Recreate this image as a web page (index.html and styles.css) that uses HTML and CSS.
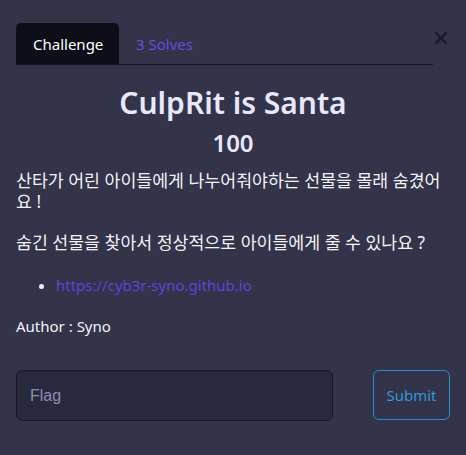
FILE: index.html
```html
<!DOCTYPE html>
<html lang="ko">
<head>
<meta charset="utf-8">
<link rel="stylesheet" href="styles.css">
</head>
<body>
<div class="modal">
  <button class="close" aria-label="Close">
    <svg width="12" height="12" viewBox="0 0 12 12"><path d="M1 1L11 11M11 1L1 11" stroke="#1b1b2c" stroke-width="2.4" stroke-linecap="square"/></svg>
  </button>
  <nav class="tabs">
    <span class="tab active">Challenge</span>
    <span class="tab">3 Solves</span>
  </nav>
  <h1 class="title">CulpRit is Santa</h1>
  <h2 class="points">100</h2>
  <div class="desc">
    <p class="ko">산타가 어린 아이들에게 나누어줘야하는 선물을 몰래 숨겼어요 !</p>
    <p class="ko">숨긴 선물을 찾아서 정상적으로 아이들에게 줄 수 있나요 ?</p>
    <ul>
      <li><a href="#">https://cyb3r-syno.github.io</a></li>
    </ul>
    <p>Author : Syno</p>
  </div>
  <form class="flag-form">
    <input class="flag-input" type="text" placeholder="Flag">
    <button class="submit" type="button">Submit</button>
  </form>
</div>
</body>
</html>
```

FILE: styles.css
```css
html, body {
  margin: 0;
  padding: 0;
  background: #33334a;
}
body {
  font-family: "Noto Sans", "Noto Sans CJK KR", sans-serif;
  color: #f2f2f7;
  width: 466px;
  height: 455px;
  overflow: hidden;
}
.modal {
  position: relative;
  padding: 23px 16px 0 16px;
}
.close {
  position: absolute;
  left: 435px;
  top: 32px;
  width: 12px;
  height: 12px;
  padding: 0;
  border: 0;
  background: none;
  display: block;
}
.close svg { display: block; }
.tabs {
  display: flex;
  width: 417px;
  border-bottom: 1px solid #1a1a28;
  height: 41px;
}
.tab {
  display: flex;
  align-items: center;
  padding: 0 17px;
  font-size: 15px;
  color: #6150de;
  border-radius: 5px 5px 0 0;
}
.tab.active {
  background: #0e0e18;
  color: #ffffff;
  width: 69px;
}
.title {
  margin: 19px 0 0 0;
  text-align: center;
  font-size: 30px;
  font-weight: 600;
  line-height: 38px;
  color: #e8e8fc;
}
.points {
  margin: 5px 0 0 0;
  text-align: center;
  font-size: 24px;
  font-weight: 600;
  line-height: 32px;
  color: #e8e8fc;
}
.desc {
  margin-top: 11px;
  font-size: 15px;
  line-height: 21px;
  width: 434px;
}
.desc p {
  margin: 0 0 20px 0;
}
.desc p.ko {
  font-size: 17.3px;
}
.desc ul {
  margin: 22px 0 20px 0;
  padding-left: 40px;
}
.desc a {
  color: #5a47d8;
  text-decoration: none;
}
.flag-form {
  display: flex;
  align-items: flex-start;
  margin-top: 33px;
  width: 434px;
}
.flag-input {
  box-sizing: border-box;
  width: 317px;
  height: 51px;
  background: #29293e;
  border: 1px solid #17172a;
  border-radius: 6px;
  padding: 0 13px;
  font-family: "Liberation Sans", Arial, sans-serif;
  font-size: 16px;
  color: #e0e0f0;
  outline: none;
}
.flag-input::placeholder {
  color: #8d8db4;
}
.submit {
  box-sizing: border-box;
  margin-left: auto;
  width: 77px;
  height: 50px;
  background: transparent;
  border: 1px solid #2192d0;
  border-radius: 6px;
  color: #2d99d8;
  font-family: "Noto Sans", sans-serif;
  font-size: 15px;
  padding: 0;
}
```
